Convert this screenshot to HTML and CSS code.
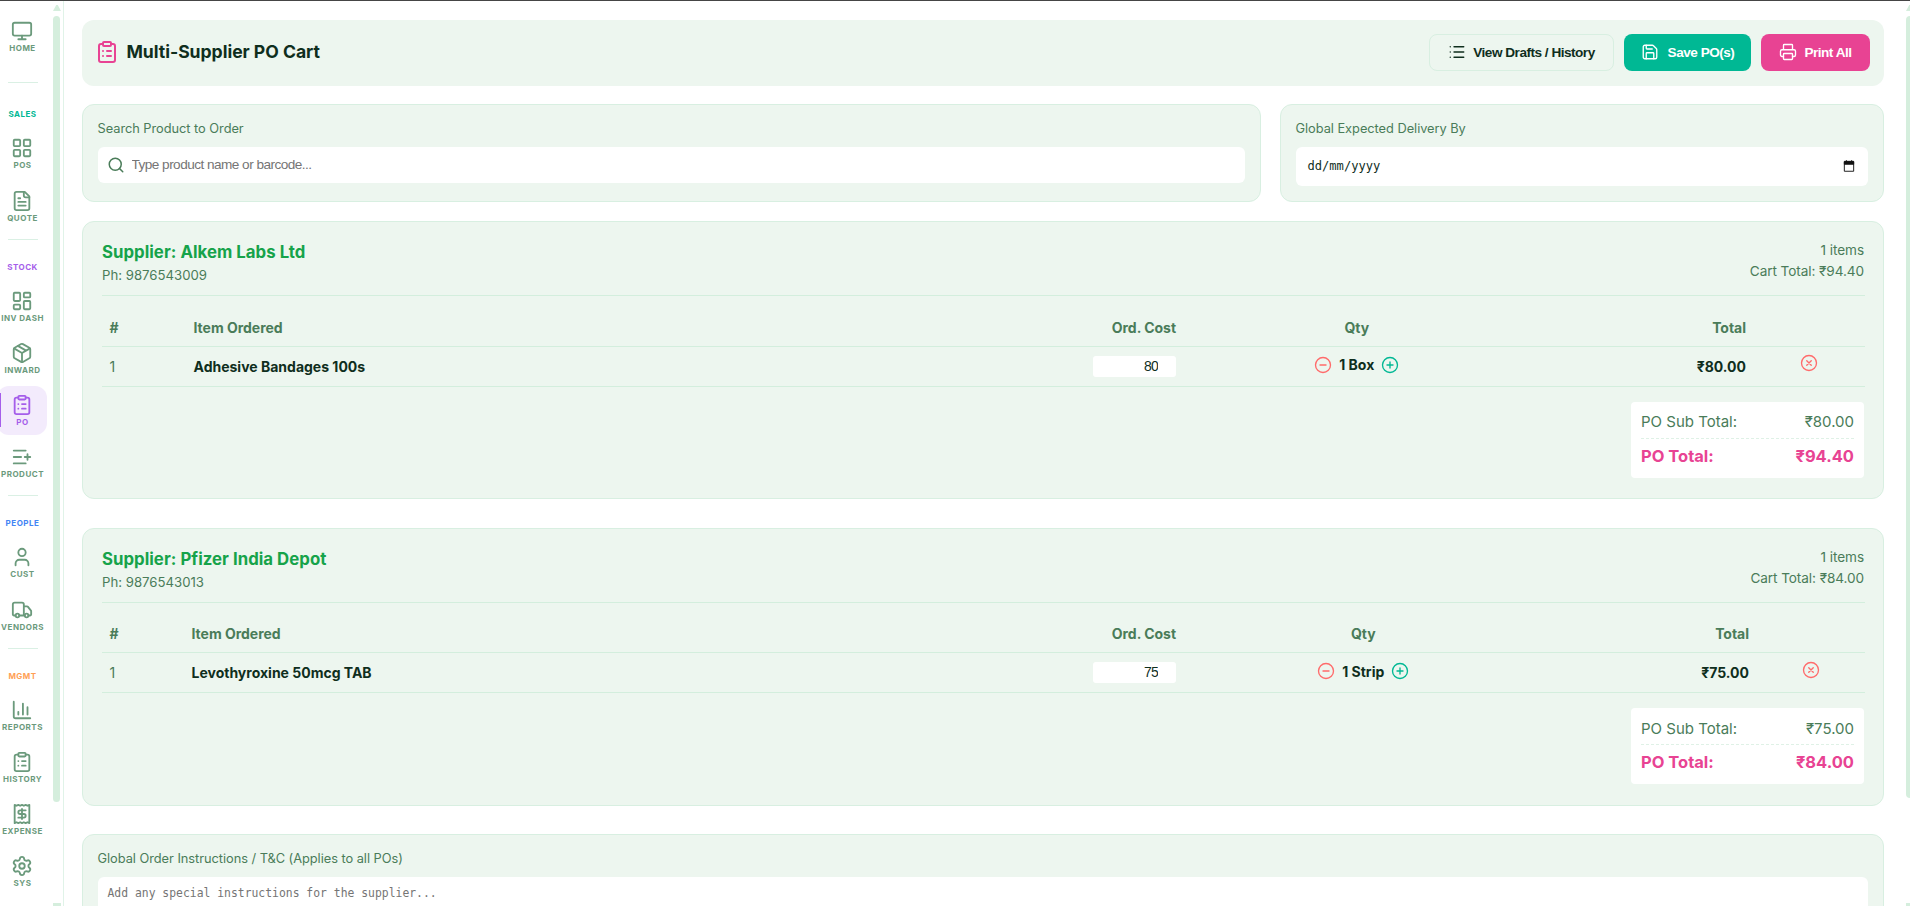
FILE: index.html
```html
<!DOCTYPE html>
<html lang="en">
<head>
  <meta charset="UTF-8">
  <meta name="viewport" content="width=device-width, initial-scale=1.0">
  <title>Multi-Supplier PO Cart</title>
  <link rel="stylesheet" href="styles.css">
</head>
<body>

  <!-- Icon set -->
  <svg class="sprite" xmlns="http://www.w3.org/2000/svg">
    <symbol id="i-monitor" viewBox="0 0 24 24"><rect x="2" y="3" width="20" height="14" rx="2"/><path d="M8 21h8M12 17v4"/></symbol>
    <symbol id="i-grid" viewBox="0 0 24 24"><rect x="3" y="3" width="7" height="7" rx="1"/><rect x="14" y="3" width="7" height="7" rx="1"/><rect x="14" y="14" width="7" height="7" rx="1"/><rect x="3" y="14" width="7" height="7" rx="1"/></symbol>
    <symbol id="i-file" viewBox="0 0 24 24"><path d="M15 2H6a2 2 0 0 0-2 2v16a2 2 0 0 0 2 2h12a2 2 0 0 0 2-2V7Z"/><path d="M14 2v4a2 2 0 0 0 2 2h4M10 9H8M16 13H8M16 17H8"/></symbol>
    <symbol id="i-dash" viewBox="0 0 24 24"><rect x="3" y="3" width="7" height="9" rx="1"/><rect x="14" y="3" width="7" height="5" rx="1"/><rect x="14" y="12" width="7" height="9" rx="1"/><rect x="3" y="16" width="7" height="5" rx="1"/></symbol>
    <symbol id="i-package" viewBox="0 0 24 24"><path d="M11 21.73a2 2 0 0 0 2 0l7-4A2 2 0 0 0 21 16V8a2 2 0 0 0-1-1.73l-7-4a2 2 0 0 0-2 0l-7 4A2 2 0 0 0 3 8v8a2 2 0 0 0 1 1.73z"/><path d="M12 22V12M3.29 7 12 12l8.71-5M7.5 4.27l9 5.15"/></symbol>
    <symbol id="i-clipboard" viewBox="0 0 24 24"><rect x="8" y="2" width="8" height="4" rx="1"/><path d="M16 4h2a2 2 0 0 1 2 2v14a2 2 0 0 1-2 2H6a2 2 0 0 1-2-2V6a2 2 0 0 1 2-2h2M12 11h4M12 16h4M8 11h.01M8 16h.01"/></symbol>
    <symbol id="i-list-plus" viewBox="0 0 24 24"><path d="M16 5H3M11 12H3M16 19H3M18 9v6M21 12h-6"/></symbol>
    <symbol id="i-user" viewBox="0 0 24 24"><path d="M19 21v-2a4 4 0 0 0-4-4H9a4 4 0 0 0-4 4v2"/><circle cx="12" cy="7" r="4"/></symbol>
    <symbol id="i-truck" viewBox="0 0 24 24"><path d="M14 18V6a2 2 0 0 0-2-2H4a2 2 0 0 0-2 2v11a1 1 0 0 0 1 1h2M15 18H9M19 18h2a1 1 0 0 0 1-1v-3.65a1 1 0 0 0-.22-.624l-3.48-4.35A1 1 0 0 0 17.52 8H14"/><circle cx="17" cy="18" r="2"/><circle cx="7" cy="18" r="2"/></symbol>
    <symbol id="i-chart" viewBox="0 0 24 24"><path d="M3 3v16a2 2 0 0 0 2 2h16M18 17V9M13 17V5M8 17v-3"/></symbol>
    <symbol id="i-receipt" viewBox="0 0 24 24"><path d="M4 2v20l2-1 2 1 2-1 2 1 2-1 2 1 2-1 2 1V2l-2 1-2-1-2 1-2-1-2 1-2-1-2 1Z"/><path d="M16 8h-6a2 2 0 1 0 0 4h4a2 2 0 1 1 0 4H8M12 17.5v-11"/></symbol>
    <symbol id="i-settings" viewBox="0 0 24 24"><path d="M9.671 4.136a2.34 2.34 0 0 1 4.659 0 2.34 2.34 0 0 0 3.319 1.915 2.34 2.34 0 0 1 2.33 4.033 2.34 2.34 0 0 0 0 3.831 2.34 2.34 0 0 1-2.33 4.033 2.34 2.34 0 0 0-3.319 1.915 2.34 2.34 0 0 1-4.659 0 2.34 2.34 0 0 0-3.32-1.915 2.34 2.34 0 0 1-2.33-4.033 2.34 2.34 0 0 0 0-3.831A2.34 2.34 0 0 1 6.35 6.051a2.34 2.34 0 0 0 3.319-1.915"/><circle cx="12" cy="12" r="3"/></symbol>
    <symbol id="i-list" viewBox="0 0 24 24"><path d="M3 5h.01M3 12h.01M3 19h.01M8 5h13M8 12h13M8 19h13"/></symbol>
    <symbol id="i-save" viewBox="0 0 24 24"><path d="M15.2 3a2 2 0 0 1 1.4.6l3.8 3.8a2 2 0 0 1 .6 1.4V19a2 2 0 0 1-2 2H5a2 2 0 0 1-2-2V5a2 2 0 0 1 2-2z"/><path d="M17 21v-7a1 1 0 0 0-1-1H8a1 1 0 0 0-1 1v7M7 3v4a1 1 0 0 0 1 1h7"/></symbol>
    <symbol id="i-printer" viewBox="0 0 24 24"><path d="M6 18H4a2 2 0 0 1-2-2v-5a2 2 0 0 1 2-2h16a2 2 0 0 1 2 2v5a2 2 0 0 1-2 2h-2M6 9V3a1 1 0 0 1 1-1h10a1 1 0 0 1 1 1v6"/><rect x="6" y="14" width="12" height="8" rx="1"/></symbol>
    <symbol id="i-search" viewBox="0 0 24 24"><circle cx="11" cy="11" r="8"/><path d="m21 21-4.34-4.34"/></symbol>
    <symbol id="i-minus" viewBox="0 0 24 24"><circle cx="12" cy="12" r="10"/><path d="M8 12h8"/></symbol>
    <symbol id="i-plus" viewBox="0 0 24 24"><circle cx="12" cy="12" r="10"/><path d="M8 12h8M12 8v8"/></symbol>
    <symbol id="i-x" viewBox="0 0 24 24"><circle cx="12" cy="12" r="10"/><path d="m15 9-6 6M9 9l6 6"/></symbol>
    <symbol id="i-calendar" viewBox="0 0 24 24"><path d="M4 5h16v16H4z"/><path class="solid" d="M4 4h16v5H4z"/><path d="M7.5 2v3M16.5 2v3"/></symbol>
  </svg>

  <div class="app">
    <aside class="sidebar">
      <nav class="nav">
        <a class="nav-item home"><svg class="icon"><use href="#i-monitor"/></svg><span>HOME</span></a>
        <div class="nav-line"></div>
        <div class="nav-label sales">SALES</div>
        <a class="nav-item"><svg class="icon"><use href="#i-grid"/></svg><span>POS</span></a>
        <a class="nav-item"><svg class="icon"><use href="#i-file"/></svg><span>QUOTE</span></a>
        <div class="nav-line"></div>
        <div class="nav-label stock">STOCK</div>
        <a class="nav-item"><svg class="icon"><use href="#i-dash"/></svg><span>INV DASH</span></a>
        <a class="nav-item"><svg class="icon"><use href="#i-package"/></svg><span>INWARD</span></a>
        <a class="nav-item active"><svg class="icon"><use href="#i-clipboard"/></svg><span>PO</span></a>
        <a class="nav-item"><svg class="icon"><use href="#i-list-plus"/></svg><span>PRODUCT</span></a>
        <div class="nav-line"></div>
        <div class="nav-label people">PEOPLE</div>
        <a class="nav-item"><svg class="icon"><use href="#i-user"/></svg><span>CUST</span></a>
        <a class="nav-item"><svg class="icon"><use href="#i-truck"/></svg><span>VENDORS</span></a>
        <div class="nav-line"></div>
        <div class="nav-label mgmt">MGMT</div>
        <a class="nav-item"><svg class="icon"><use href="#i-chart"/></svg><span>REPORTS</span></a>
        <a class="nav-item"><svg class="icon"><use href="#i-clipboard"/></svg><span>HISTORY</span></a>
        <a class="nav-item"><svg class="icon"><use href="#i-receipt"/></svg><span>EXPENSE</span></a>
        <a class="nav-item"><svg class="icon"><use href="#i-settings"/></svg><span>SYS</span></a>
      </nav>
      <div class="scroll">
        <div class="scroll-up"></div>
        <div class="scroll-thumb"></div>
        <div class="scroll-down"></div>
      </div>
    </aside>

    <main class="main">
      <header class="page-header">
        <svg class="icon title-icon"><use href="#i-clipboard"/></svg>
        <h1>Multi-Supplier PO Cart</h1>
        <div class="actions">
          <button class="btn btn-outline"><svg class="icon"><use href="#i-list"/></svg><span>View Drafts / History</span></button>
          <button class="btn btn-save"><svg class="icon"><use href="#i-save"/></svg><span>Save PO(s)</span></button>
          <button class="btn btn-print"><svg class="icon"><use href="#i-printer"/></svg><span>Print All</span></button>
        </div>
      </header>

      <div class="filters">
        <section class="card field-card">
          <label class="label">Search Product to Order</label>
          <div class="search">
            <svg class="icon"><use href="#i-search"/></svg>
            <input type="text" placeholder="Type product name or barcode...">
          </div>
        </section>
        <section class="card field-card">
          <label class="label">Global Expected Delivery By</label>
          <div class="date">
            <span>dd/mm/yyyy</span>
            <svg class="icon"><use href="#i-calendar"/></svg>
          </div>
        </section>
      </div>

      <section class="card supplier">
        <div class="supplier-head">
          <div>
            <h2>Supplier: Alkem Labs Ltd</h2>
            <p class="phone">Ph: 9876543009</p>
          </div>
          <div class="summary">
            <div>1 items</div>
            <div>Cart Total: ₹94.40</div>
          </div>
        </div>
        <table class="items items-box">
          <colgroup><col class="c-no"><col class="c-item"><col class="c-cost"><col class="c-qty"><col class="c-total"><col class="c-del"></colgroup>
          <thead>
            <tr><th>#</th><th>Item Ordered</th><th class="right">Ord. Cost</th><th class="center">Qty</th><th class="right">Total</th><th></th></tr>
          </thead>
          <tbody>
            <tr>
              <td>1</td>
              <td class="strong">Adhesive Bandages 100s</td>
              <td class="right"><input class="cost" type="text" value="80"></td>
              <td><div class="qty"><svg class="icon red"><use href="#i-minus"/></svg><b>1 Box</b><svg class="icon teal"><use href="#i-plus"/></svg></div></td>
              <td class="right strong">₹80.00</td>
              <td><div class="del"><svg class="icon red"><use href="#i-x"/></svg></div></td>
            </tr>
          </tbody>
        </table>
        <div class="totals">
          <div class="sub"><span>PO Sub Total:</span><span>₹80.00</span></div>
          <div class="grand"><span>PO Total:</span><span>₹94.40</span></div>
        </div>
      </section>

      <section class="card supplier">
        <div class="supplier-head">
          <div>
            <h2>Supplier: Pfizer India Depot</h2>
            <p class="phone">Ph: 9876543013</p>
          </div>
          <div class="summary">
            <div>1 items</div>
            <div>Cart Total: ₹84.00</div>
          </div>
        </div>
        <table class="items items-strip">
          <colgroup><col class="c-no"><col class="c-item"><col class="c-cost"><col class="c-qty"><col class="c-total"><col class="c-del"></colgroup>
          <thead>
            <tr><th>#</th><th>Item Ordered</th><th class="right">Ord. Cost</th><th class="center">Qty</th><th class="right">Total</th><th></th></tr>
          </thead>
          <tbody>
            <tr>
              <td>1</td>
              <td class="strong">Levothyroxine 50mcg TAB</td>
              <td class="right"><input class="cost" type="text" value="75"></td>
              <td><div class="qty"><svg class="icon red"><use href="#i-minus"/></svg><b>1 Strip</b><svg class="icon teal"><use href="#i-plus"/></svg></div></td>
              <td class="right strong">₹75.00</td>
              <td><div class="del"><svg class="icon red"><use href="#i-x"/></svg></div></td>
            </tr>
          </tbody>
        </table>
        <div class="totals">
          <div class="sub"><span>PO Sub Total:</span><span>₹75.00</span></div>
          <div class="grand"><span>PO Total:</span><span>₹84.00</span></div>
        </div>
      </section>

      <section class="card field-card">
        <label class="label">Global Order Instructions / T&amp;C (Applies to all POs)</label>
        <textarea class="notes" placeholder="Add any special instructions for the supplier..."></textarea>
      </section>
    </main>

    <div class="scroll page-scroll">
      <div class="scroll-up"></div>
      <div class="scroll-thumb"></div>
      <div class="scroll-down"></div>
    </div>
  </div>

</body>
</html>
```
FILE: styles.css
```css
* {
  box-sizing: border-box;
}
body {
  font-family: Inter, "Noto Sans", sans-serif;
  margin: 0;
  background: #fff;
  color: #4a7c59;
  overflow: hidden;
}
h1, h2, p {
  margin: 0;
}
.sprite {
  display: none;
}
.solid {
  fill: currentColor;
}
.icon {
  width: 18px;
  height: 18px;
  flex-shrink: 0;
  fill: none;
  stroke: currentColor;
  stroke-width: 2;
  stroke-linecap: round;
  stroke-linejoin: round;
}
.app {
  display: flex;
  height: 906px;
  border-top: 1px solid #454545;
  overflow: hidden;
}

/* Sidebar */
.sidebar {
  display: flex;
  justify-content: space-between;
  width: 64px;
  flex-shrink: 0;
  padding-right: 2px;
  border-right: 1px solid #e0f3e8;
  overflow: hidden;
}
.nav {
  display: flex;
  flex-direction: column;
  width: 50px;
  margin-left: -3px;
  padding-top: 10px;
  flex-shrink: 0;
}
.nav-item {
  display: flex;
  flex-direction: column;
  align-items: center;
  flex-shrink: 0;
  height: 49px;
  margin-bottom: 3.3px;
  padding-top: 8.4px;
  border-radius: 12px;
  color: #6b9a7c;
  font-size: 8px;
  font-weight: 700;
  letter-spacing: 0.5px;
  line-height: 10px;
  white-space: nowrap;
}
.nav-item span {
  padding-left: 1px;
}
.nav-item .icon {
  width: 22px;
  height: 22px;
  margin-bottom: 1px;
}
.nav-item.home {
  margin-bottom: 17px;
  padding-top: 9px;
}
.home + .nav-line + .nav-label {
  height: 46px;
  padding-top: 26px;
}
.nav-item.active {
  color: #a55eea;
  background: linear-gradient(#a55eea, #a55eea) 0 50% / 4px 34px no-repeat #f3ebfc;
}
.nav-line {
  width: 30px;
  height: 1px;
  flex-shrink: 0;
  margin: 5px 0 0 11px;
  background: #daf0e4;
}
.nav-label {
  flex-shrink: 0;
  height: 41.6px;
  padding: 22px 0 0 1px;
  font-size: 8px;
  font-weight: 700;
  letter-spacing: 0.5px;
  line-height: 10px;
  text-align: center;
}
.sales {
  color: #00b894;
}
.stock {
  color: #a55eea;
}
.people {
  color: #4285f4;
}
.mgmt {
  color: #ff9f55;
}

/* Scrollbars */
.scroll {
  display: flex;
  flex-direction: column;
  width: 8px;
  padding-top: 4px;
  flex-shrink: 0;
}
.scroll-up {
  height: 6px;
  background: #d5eedd;
  clip-path: polygon(40% 0, 60% 0, 100% 100%, 0 100%);
}
.scroll-thumb {
  height: 787px;
  width: 7px;
  margin-top: 5px;
  border-radius: 4px;
  background: #d5eedd;
}
.scroll-down {
  height: 3px;
  margin-top: 101px;
  background: #d5eedd;
}
.page-scroll {
  width: 4px;
  overflow: hidden;
}
.page-scroll .scroll-up,
.page-scroll .scroll-down {
  width: 8px;
}
.page-scroll .scroll-thumb {
  width: 8px;
  height: 783px;
}
.page-scroll .scroll-down {
  margin-top: 105px;
}

/* Content */
.main {
  flex: 1;
  min-width: 0;
  padding: 19px 22px 0 18px;
}
.page-header {
  display: flex;
  align-items: center;
  height: 66px;
  padding: 0 14px 2px 13px;
  border-radius: 12px;
  background: #edf6ef;
}
.title-icon {
  width: 24px;
  height: 24px;
  color: #e84393;
}
h1 {
  margin-left: 7.5px;
  padding-bottom: 1px;
  color: #0f2e1d;
  font-size: 17.6px;
  font-weight: 700;
  letter-spacing: -0.03px;
}
.actions {
  display: flex;
  gap: 10px;
  margin-left: auto;
}
.btn {
  display: flex;
  align-items: center;
  justify-content: center;
  gap: 7px;
  height: 37px;
  padding: 0;
  border: none;
  border-radius: 8px;
  color: #fff;
  font-family: "Liberation Sans", Arial, sans-serif;
  font-size: 13.6px;
  font-weight: 700;
  letter-spacing: -0.5px;
}
.btn .icon {
  stroke-width: 1.8;
}
.btn-outline {
  width: 185px;
  border: 1px solid #d8efe1;
  background: transparent;
  color: #0f2e1d;
}
.btn-save {
  width: 127px;
  gap: 9px;
  background: #00b894;
}
.btn-print {
  width: 109px;
  background: #e84393;
}
.filters {
  display: grid;
  grid-template-columns: 1fr 604px;
  gap: 19px;
  margin: 18px 0 19px;
}
.card {
  border: 1px solid #d8efe1;
  border-radius: 12px;
  background: #edf6ef;
}
.field-card {
  height: 98px;
  padding: 15px 15px 0 14.5px;
}
.label {
  display: block;
  height: 27px;
  font-size: 12.8px;
  letter-spacing: -0.03px;
  line-height: 18px;
}
.search {
  display: flex;
  align-items: center;
  gap: 7px;
  height: 36px;
  padding-left: 9px;
  border-radius: 6px;
  background: #fff;
}
.search input {
  flex: 1;
  padding: 0 0 2px;
  border: none;
  outline: none;
  font: 13.6px "Liberation Sans", Arial, sans-serif;
  letter-spacing: -0.53px;
}
.search input::placeholder {
  color: #757575;
}
.date {
  display: flex;
  align-items: center;
  justify-content: space-between;
  height: 39px;
  padding: 0 12px;
  border-radius: 6px;
  background: #fff;
  color: #0f2e1d;
  font: 12.1px "DejaVu Sans Mono", monospace;
}
.date span {
  padding-bottom: 1px;
}
.date .icon {
  width: 14px;
  height: 14px;
  margin-bottom: 1px;
  color: #111;
  stroke-width: 1.6;
  stroke-linecap: butt;
}

/* Supplier cards */
.supplier {
  height: 278px;
  margin-bottom: 28.6px;
  padding: 18px 18px 0 19px;
}
.supplier-head {
  display: flex;
  justify-content: space-between;
  height: 56px;
  border-bottom: 1px solid #d3eedd;
}
h2 {
  color: #16a34a;
  font-size: 16.8px;
  font-weight: 700;
  letter-spacing: 0.03px;
  line-height: 24px;
}
.phone {
  font-size: 13.2px;
  line-height: 22px;
}
.summary {
  padding-right: 1px;
  font-size: 13.6px;
  letter-spacing: -0.08px;
  line-height: 21px;
  text-align: right;
}
.items {
  width: 100%;
  margin-top: 13px;
  border-collapse: collapse;
  table-layout: fixed;
  font-size: 14px;
}
.items th,
.items td {
  height: 40px;
  padding: 0 8px 0 7.5px;
  border-bottom: 1px solid #d3eedd;
  text-align: left;
}
.items th {
  height: 37px;
  font-weight: 700;
  letter-spacing: -0.02px;
}
.items .right {
  text-align: right;
}
.items .center {
  text-align: center;
}
.items .strong {
  color: #0f2e1d;
  font-weight: 700;
  letter-spacing: 0;
}
.c-cost {
  width: 120px;
}
.items-box .c-no {
  width: 84px;
}
.items-box .c-qty {
  width: 346px;
}
.items-box .c-total {
  width: 224px;
}
.items-box .c-del {
  width: 111px;
}
.items-strip .c-no {
  width: 82px;
}
.items-strip .c-qty {
  width: 359px;
}
.items-strip .c-total {
  width: 214px;
}
.items-strip .c-del {
  width: 108px;
}
.cost {
  display: block;
  width: 83px;
  height: 21px;
  margin-left: auto;
  padding: 0 18px 1px 0;
  border: none;
  border-radius: 3px;
  background: #fff;
  color: #0f2e1d;
  font: 14px "Liberation Sans", Arial, sans-serif;
  letter-spacing: -0.8px;
  text-align: right;
}
.qty {
  display: flex;
  align-items: center;
  justify-content: center;
  gap: 7px;
  padding-bottom: 3px;
}
.qty b {
  color: #0f2e1d;
  font-weight: 700;
}
.qty .icon,
.del .icon {
  stroke-width: 1.8;
}
.del {
  display: flex;
  justify-content: center;
  padding-bottom: 6px;
}
.red {
  color: #ff6b6b;
}
.teal {
  color: #00b894;
}
.totals {
  width: 233px;
  height: 76px;
  margin: 15px 1px 0 auto;
  padding: 0 10px;
  border-radius: 4px;
  background: #fff;
}
.totals div {
  display: flex;
  justify-content: space-between;
  align-items: center;
  height: 37px;
}
.totals .sub {
  padding-top: 4px;
  border-bottom: 1px dashed #dff1e6;
  font-size: 15px;
}
.totals .grand {
  height: 34px;
  color: #e84393;
  font-size: 16.5px;
  font-weight: 700;
}
.notes {
  display: block;
  width: 100%;
  height: 80px;
  padding: 9px 10px;
  border: none;
  border-radius: 6px;
  resize: none;
  font: 11.4px "DejaVu Sans Mono", monospace;
}
.notes::placeholder {
  color: #757575;
}
```
